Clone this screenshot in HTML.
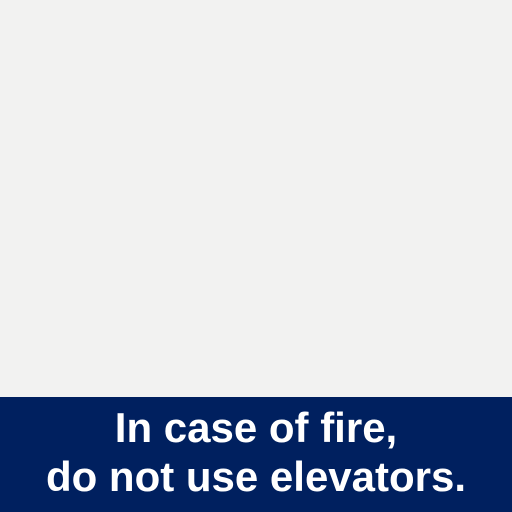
<!DOCTYPE html>
<html><head><style>
html,body{margin:0;padding:0;width:512px;height:512px;overflow:hidden;background:#f2f2f1;}
.b{position:absolute;left:0;top:397px;width:512px;height:115px;background:#00205f;}
.t{position:absolute;left:0;top:403px;width:512px;text-align:center;color:#fff;font-family:"Liberation Sans",sans-serif;font-weight:bold;font-size:42px;line-height:49px;}
</style></head><body>
<div class="b"></div>
<div class="t">In case of fire,<br>do not use elevators.</div>
</body></html>
